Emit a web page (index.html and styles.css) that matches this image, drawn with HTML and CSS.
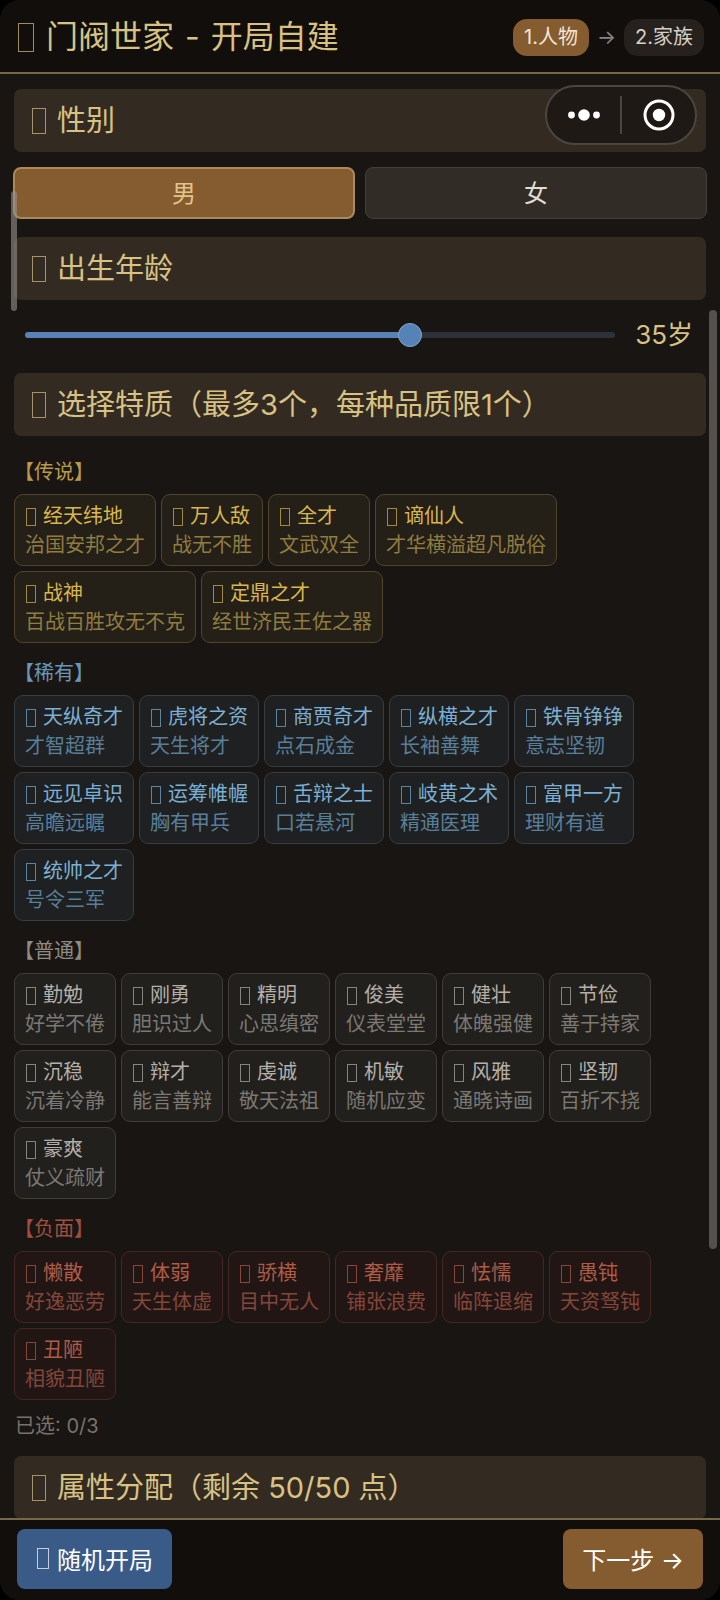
FILE: index.html
```html
<!DOCTYPE html>
<html lang="zh-CN">
<head>
  <meta charset="UTF-8">
  <meta name="viewport" content="width=device-width, initial-scale=1.0">
  <title>门阀世家 - 开局自建</title>
  <link rel="stylesheet" href="styles.css">
</head>
<body>
  <div class="app">
    <header class="header">
      <h1><i class="glyph"></i><span>门阀世家</span><span>-</span><span>开局自建</span></h1>
      <div class="steps">
        <span class="step active">1.人物</span>
        <span class="arrow">→</span>
        <span class="step">2.家族</span>
      </div>
    </header>

    <main class="content">
      <h2 class="section-title"><i class="glyph"></i>性别</h2>
      <div class="gender">
        <button class="gender-btn selected" type="button">男</button>
        <button class="gender-btn" type="button">女</button>
      </div>

      <h2 class="section-title"><i class="glyph"></i><label for="age">出生年龄</label></h2>
      <div class="age-row">
        <input type="range" id="age" min="6" max="50" value="35">
        <output id="ageValue" for="age">35岁</output>
      </div>

      <h2 class="section-title"><i class="glyph"></i>选择特质（最多3个，每种品质限1个）</h2>
      <div class="traits" id="traits"></div>
      <p class="picked" id="picked">已选: 0/3</p>

      <h2 class="section-title"><i class="glyph"></i>属性分配（剩余 50/50 点）</h2>
    </main>

    <footer class="footer">
      <button class="btn btn-random" type="button"><i class="glyph"></i>随机开局</button>
      <button class="btn btn-next" type="button">下一步 →</button>
    </footer>

    <div class="capsule">
      <button type="button" aria-label="更多">
        <svg width="32" height="14" viewBox="0 0 32 14" fill="#fff">
          <circle cx="3.5" cy="7" r="3.4"></circle>
          <circle cx="16" cy="7" r="5.8"></circle>
          <circle cx="28.5" cy="7" r="3.4"></circle>
        </svg>
      </button>
      <button type="button" aria-label="关闭">
        <svg width="32" height="32" viewBox="0 0 32 32">
          <circle cx="16" cy="16" r="14" fill="none" stroke="#fff" stroke-width="3"></circle>
          <circle cx="16" cy="16" r="6.2" fill="#fff"></circle>
        </svg>
      </button>
    </div>
    <div class="scrollbar scrollbar-left"></div>
    <div class="scrollbar scrollbar-right"></div>
  </div>

  <script>
    const groups = [
      { key: 'legend', name: '传说', items: [
        ['经天纬地', '治国安邦之才'], ['万人敌', '战无不胜'], ['全才', '文武双全'],
        ['谪仙人', '才华横溢超凡脱俗'], ['战神', '百战百胜攻无不克'], ['定鼎之才', '经世济民王佐之器']
      ] },
      { key: 'rare', name: '稀有', items: [
        ['天纵奇才', '才智超群'], ['虎将之资', '天生将才'], ['商贾奇才', '点石成金'],
        ['纵横之才', '长袖善舞'], ['铁骨铮铮', '意志坚韧'], ['远见卓识', '高瞻远瞩'],
        ['运筹帷幄', '胸有甲兵'], ['舌辩之士', '口若悬河'], ['岐黄之术', '精通医理'],
        ['富甲一方', '理财有道'], ['统帅之才', '号令三军']
      ] },
      { key: 'common', name: '普通', items: [
        ['勤勉', '好学不倦'], ['刚勇', '胆识过人'], ['精明', '心思缜密'], ['俊美', '仪表堂堂'],
        ['健壮', '体魄强健'], ['节俭', '善于持家'], ['沉稳', '沉着冷静'], ['辩才', '能言善辩'],
        ['虔诚', '敬天法祖'], ['机敏', '随机应变'], ['风雅', '通晓诗画'], ['坚韧', '百折不挠'],
        ['豪爽', '仗义疏财']
      ] },
      { key: 'negative', name: '负面', items: [
        ['懒散', '好逸恶劳'], ['体弱', '天生体虚'], ['骄横', '目中无人'], ['奢靡', '铺张浪费'],
        ['怯懦', '临阵退缩'], ['愚钝', '天资驽钝'], ['丑陋', '相貌丑陋']
      ] }
    ];

    const traits = document.getElementById('traits');
    const picked = document.getElementById('picked');
    const age = document.getElementById('age');
    const ageValue = document.getElementById('ageValue');

    traits.innerHTML = groups.map(g => `
      <section class="group ${g.key}">
        <h3>【${g.name}】</h3>
        <div class="trait-list">
          ${g.items.map(([name, desc]) => `
            <button class="trait" type="button">
              <span class="trait-name"><i class="glyph"></i>${name}</span>
              <span class="trait-desc">${desc}</span>
            </button>`).join('')}
        </div>
      </section>`).join('');

    // One trait per quality, three in total
    traits.addEventListener('click', e => {
      const card = e.target.closest('.trait');
      if (!card) return;
      const wasSelected = card.classList.contains('selected');
      card.parentNode.querySelectorAll('.selected').forEach(el => el.classList.remove('selected'));
      if (!wasSelected && traits.querySelectorAll('.selected').length < 3) {
        card.classList.add('selected');
      }
      picked.textContent = `已选: ${traits.querySelectorAll('.selected').length}/3`;
    });

    document.querySelectorAll('.gender-btn').forEach(btn => {
      btn.addEventListener('click', () => {
        document.querySelector('.gender-btn.selected').classList.remove('selected');
        btn.classList.add('selected');
      });
    });

    function updateAge() {
      const percent = (age.value - age.min) / (age.max - age.min) * 100;
      age.style.setProperty('--fill', percent + '%');
      ageValue.textContent = age.value + '岁';
    }

    age.addEventListener('input', updateAge);
    updateAge();
  </script>
</body>
</html>
```
FILE: styles.css
```css
:root {
  --bg: #191512;
  --bar: #110e0b;
  --line: #766845;
  --gold: #d8c283;
  --brown: #855b30;
  --panel: #332b22;
}

* {
  margin: 0;
  padding: 0;
  box-sizing: border-box;
}

body {
  font-family: Inter, "Noto Sans CJK SC", sans-serif;
  background: #000;
}

button {
  font-family: inherit;
  cursor: pointer;
}

.app {
  position: relative;
  display: flex;
  flex-direction: column;
  height: 100vh;
  background: var(--bg);
  border-radius: 20px;
  overflow: hidden;
}

/* hollow box in front of titles and names */
.glyph {
  flex: none;
  display: inline-block;
  width: 10px;
  height: 18px;
  margin: 0 7px 0 1px;
  border: 1px solid;
  opacity: 0.7;
}

.header {
  flex: none;
  display: flex;
  justify-content: space-between;
  align-items: center;
  height: 74px;
  padding: 2px 16px 0 18px;
  background: var(--bar);
  border-bottom: 2px solid var(--line);
}

.header h1 {
  display: flex;
  align-items: center;
  gap: 11px;
  font-size: 32px;
  font-weight: 400;
  line-height: 40px;
  color: var(--gold);
}

.header .glyph {
  width: 16px;
  height: 29px;
  margin: 0 1px 0 0;
}

.steps {
  display: flex;
  align-items: center;
  gap: 8px;
  font-size: 20px;
}

.step {
  padding: 0 11px;
  line-height: 37px;
  border-radius: 14px;
  background: #26211d;
  color: #d6d0c8;
}

.step.active {
  background: var(--brown);
  color: #f2e6d6;
}

.arrow {
  color: #8a8580;
}

.content {
  flex: 1;
  min-height: 0;
  padding: 15px 14px 0;
  overflow: hidden;
}

.section-title {
  display: flex;
  align-items: center;
  height: 63px;
  padding: 0 17px;
  border-radius: 7px;
  background: var(--panel);
  color: var(--gold);
  font-size: 29px;
  font-weight: 400;
  line-height: 40px;
}

.section-title .glyph {
  width: 14px;
  height: 26px;
  margin: 0 11px 0 1px;
}

.gender {
  display: grid;
  grid-template-columns: 1fr 1fr;
  gap: 10px;
  margin: 15px -1px 18px;
}

.gender-btn {
  height: 52px;
  padding-bottom: 3px;
  border: 1px solid #443e38;
  border-radius: 8px;
  background: #322c27;
  color: #e2dcd4;
  font-size: 24px;
}

.gender-btn.selected {
  border: 2px solid #a88b58;
  background: var(--brown);
  color: #e0c48a;
}

.age-row {
  display: flex;
  align-items: center;
  gap: 20px;
  height: 73px;
  padding: 0 13px 3px 11px;
  color: var(--gold);
  font-size: 26px;
  line-height: 36px;
}

.age-row input {
  flex: 1;
  min-width: 0;
  height: 24px;
  appearance: none;
  background: none;
}

.age-row input::-webkit-slider-runnable-track {
  height: 6px;
  border-radius: 3px;
  background: linear-gradient(to right, #5a80b8 var(--fill), #2f3139 var(--fill));
}

.age-row input::-webkit-slider-thumb {
  appearance: none;
  width: 24px;
  height: 24px;
  margin-top: -9px;
  border: 1px solid #86a4c6;
  border-radius: 50%;
  background: #5583b8;
}

.traits {
  padding-top: 6px;
}

.group {
  color: var(--name);
}

.group h3 {
  padding: 16px 0 8px;
  color: var(--title);
  font-size: 20px;
  font-weight: 400;
  line-height: 28px;
}

.trait-list {
  display: flex;
  flex-wrap: wrap;
  gap: 5px;
}

.trait {
  padding: 7px 10px 6px;
  border: 1px solid var(--edge);
  border-radius: 9px;
  background: var(--card);
  color: var(--name);
  font-size: 20px;
  line-height: 29px;
  text-align: left;
}

.trait.selected {
  border-color: var(--name);
}

.trait-name {
  display: flex;
  align-items: center;
}

.trait-desc {
  display: block;
  color: var(--desc);
  line-height: 28px;
}

.legend {
  --title: #b89a4c;
  --name: #d8b650;
  --desc: #8f7c40;
  --card: #241f17;
  --edge: #50442a;
}

.rare {
  --title: #6798bc;
  --name: #7bb0d4;
  --desc: #587f99;
  --card: #1f2021;
  --edge: #343d42;
}

.common {
  --title: #8f8a84;
  --name: #b4afa9;
  --desc: #7c7873;
  --card: #21201d;
  --edge: #403d39;
}

.negative {
  --title: #a04e40;
  --name: #ae5c48;
  --desc: #82463b;
  --card: #221614;
  --edge: #442722;
}

.picked {
  padding: 12px 1px 16px;
  color: #77726c;
  font-size: 20px;
  line-height: 28px;
}

.footer {
  flex: none;
  display: flex;
  justify-content: space-between;
  padding: 9px 17px 11px;
  background: var(--bar);
  border-top: 2px solid var(--line);
}

.btn {
  display: flex;
  align-items: center;
  height: 60px;
  padding: 0 19px 2px;
  border: none;
  border-radius: 8px;
  color: #fff;
  font-size: 24px;
}

.btn .glyph {
  width: 12px;
  height: 21px;
  margin: 0 8px 0 1px;
}

.btn-random {
  background: #3a5a88;
}

.btn-next {
  background: var(--brown);
}

/* floating mini-program menu */
.capsule {
  position: absolute;
  top: 85px;
  right: 23px;
  display: flex;
  align-items: center;
  width: 152px;
  height: 60px;
  border: 2px solid #4b4540;
  border-radius: 30px;
  background: #1f1915;
}

.capsule button {
  flex: 1;
  display: flex;
  align-items: center;
  justify-content: center;
  height: 38px;
  border: none;
  background: none;
}

.capsule button + button {
  border-left: 2px solid #4b4540;
}

.scrollbar {
  position: absolute;
  border-radius: 4px;
}

.scrollbar-left {
  top: 191px;
  left: 11px;
  width: 6px;
  height: 120px;
  background: rgba(150, 145, 140, 0.6);
}

.scrollbar-right {
  top: 310px;
  right: 3px;
  width: 8px;
  height: 939px;
  background: #55504c;
}
```
